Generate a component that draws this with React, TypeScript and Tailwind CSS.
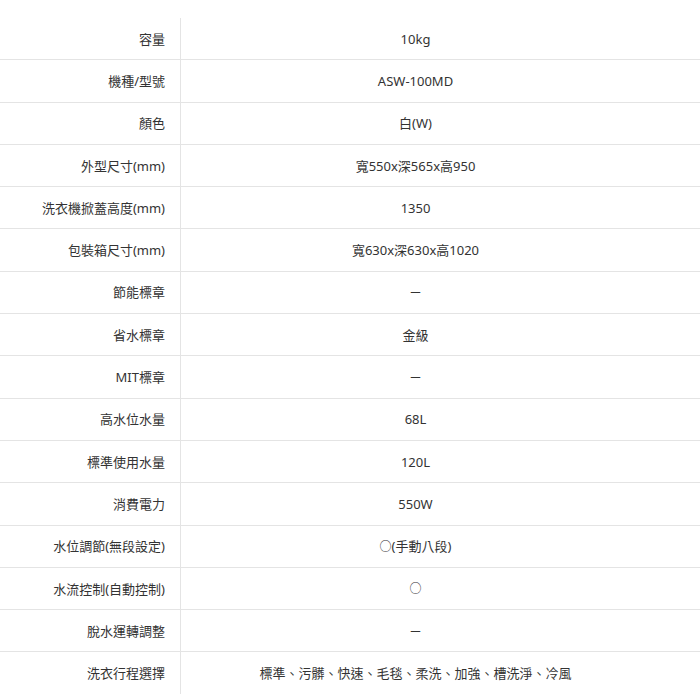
import React from "react";

const rows: [string, React.ReactNode][] = [
  ["容量", "10kg"],
  ["機種/型號", "ASW-100MD"],
  ["顏色", "白(W)"],
  ["外型尺寸(mm)", "寬550x深565x高950"],
  ["洗衣機掀蓋高度(mm)", "1350"],
  ["包裝箱尺寸(mm)", "寬630x深630x高1020"],
  ["節能標章", "－"],
  ["省水標章", "金級"],
  ["MIT標章", "－"],
  ["高水位水量", "68L"],
  ["標準使用水量", "120L"],
  ["消費電力", "550W"],
  [
    "水位調節(無段設定)",
    <>
      <span className="text-[12px]">○</span>(手動八段)
    </>,
  ],
  ["水流控制(自動控制)", <span className="text-[12px]">○</span>],
  ["脫水運轉調整", "－"],
  ["洗衣行程選擇", "標準、污髒、快速、毛毯、柔洗、加強、槽洗淨、冷風"],
];

export default function App() {
  return (
    <div
      className="w-[700px] h-[700px] bg-white pt-[18px] text-[13px] text-[#333333] overflow-hidden"
      style={{ fontFamily: '"Noto Sans", "Noto Sans CJK TC", sans-serif' }}
    >
      <div className="flex flex-col">
        {rows.map(([label, value], i) => {
          const last = i === rows.length - 1;
          return (
            <div
              key={label}
              className={
                last
                  ? "flex h-[38px]"
                  : "flex h-[42.3px] border-b border-[#e4e4e4]"
              }
            >
              <div
                className={
                  last
                    ? "w-[181px] shrink-0 border-r border-[#e4e4e4] flex justify-end items-start pt-[4px] pr-[15px] h-[42px]"
                    : "w-[181px] shrink-0 border-r border-[#e4e4e4] flex justify-end items-center pr-[15px]"
                }
              >
                <span className="leading-[34px]">{label}</span>
              </div>
              <div
                className={
                  last
                    ? "flex-1 flex justify-center items-start pt-[4px] pr-[50px]"
                    : "flex-1 flex justify-center items-center pr-[50px]"
                }
              >
                <span className="leading-[34px]">{value}</span>
              </div>
            </div>
          );
        })}
      </div>
    </div>
  );
}
